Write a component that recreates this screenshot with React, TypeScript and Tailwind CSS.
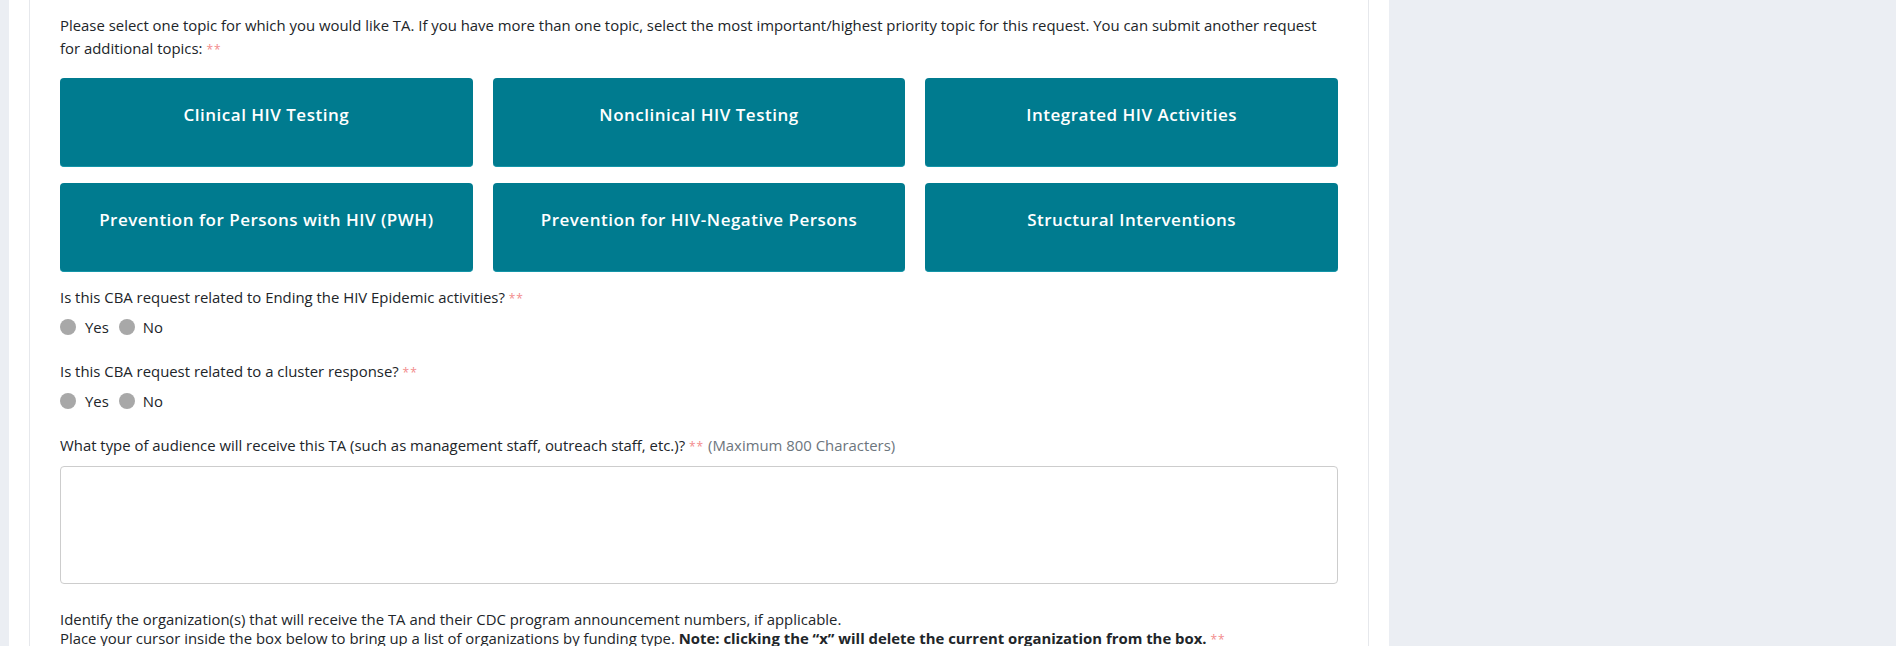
import React from "react";

const Req = () => <span className="text-[#f28b8b] text-[12px] tracking-[1px]">**</span>;

const topics = [
  "Clinical HIV Testing",
  "Nonclinical HIV Testing",
  "Integrated HIV Activities",
  "Prevention for Persons with HIV (PWH)",
  "Prevention for HIV-Negative Persons",
  "Structural Interventions",
];

function RadioRow() {
  return (
    <div className="flex items-center h-[24px] text-[14.9px] text-[#212529]">
      <span className="w-[16px] h-[16px] rounded-full bg-[#a8a8a8] inline-block" />
      <span className="ml-[9px]">Yes</span>
      <span className="ml-[10px] w-[16px] h-[16px] rounded-full bg-[#a8a8a8] inline-block" />
      <span className="ml-[8px]">No</span>
    </div>
  );
}

export default function App() {
  return (
    <div
      className="min-h-[646px] h-[646px] overflow-hidden bg-[#ebeef3] flex"
      style={{ fontFamily: '"Open Sans", "Liberation Sans", sans-serif' }}
    >
      <div className="ml-[9px] w-[1380px] bg-white px-[20px] h-full">
        <div className="border-x border-[#e6e8ec] h-full px-[30px] pt-[14px] text-[14.9px] text-[#212529]">
          <p className="leading-[23px]">
            Please select one topic for which you would like TA. If you have more than one topic, select the most important/highest priority topic for this request. You can submit another request
            <br />
            for additional topics: <Req />
          </p>
          <div className="grid grid-cols-3 gap-x-[20px] gap-y-[16px] mt-[17px]">
            {topics.map((t) => (
              <div
                key={t}
                className="h-[89px] rounded-[4px] bg-[#007b8f] border-b border-[#1495a8] text-white text-[17px] tracking-[0.5px] font-semibold text-center pt-[25px] leading-[24px]"
              >
                {t}
              </div>
            ))}
          </div>
          <p className="mt-[14px] leading-[23px]">
            Is this CBA request related to Ending the HIV Epidemic activities? <Req />
          </p>
          <div className="mt-[5px]"><RadioRow /></div>
          <p className="mt-[21px] leading-[23px]">
            Is this CBA request related to a cluster response? <Req />
          </p>
          <div className="mt-[5px]"><RadioRow /></div>
          <p className="mt-[21px] leading-[23px]">
            What type of audience will receive this TA (such as management staff, outreach staff, etc.)? <Req />{" "}
            <span className="text-[#6c757d]">(Maximum 800 Characters)</span>
          </p>
          <textarea className="mt-[8px] block w-full h-[118px] border border-[#cdcdcd] rounded-[4px] resize-none outline-none" />
          <p className="mt-[26px] leading-[19px]">
            Identify the organization(s) that will receive the TA and their CDC program announcement numbers, if applicable.
            <br />
            Place your cursor inside the box below to bring up a list of organizations by funding type.{" "}
            <b className="font-bold">Note: clicking the “x” will delete the current organization from the box.</b> <Req />
          </p>
        </div>
      </div>
    </div>
  );
}
